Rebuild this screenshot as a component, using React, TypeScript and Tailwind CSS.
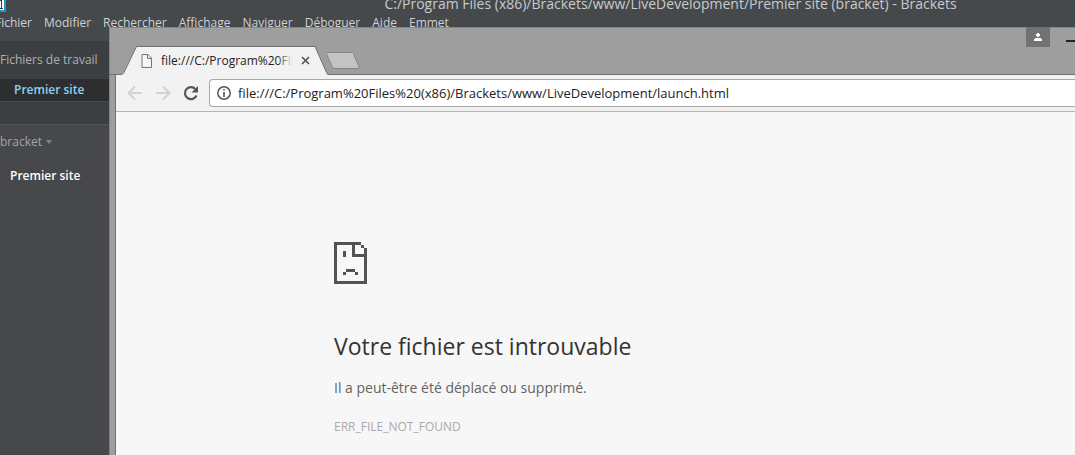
import { useState } from 'react'

const MENUS = ['Fichier', 'Modifier', 'Rechercher', 'Affichage', 'Naviguer', 'Déboguer', 'Aide', 'Emmet']

function FileIcon() {
  return (
    <svg width="12" height="14" viewBox="0 0 12 14" className="shrink-0" fill="none" stroke="#757575">
      <path d="M1 .5h6l3.5 3.5v9.5H1z" fill="#f7f7f7" />
      <path d="M6.5 .5v4h4" />
    </svg>
  )
}

function SadFileIcon() {
  return (
    <svg width="33" height="42" viewBox="0 0 11 14" fill="#535353" shapeRendering="crispEdges">
      <path d="M0 0h9v1h1v1h1v12H0zM1 1v12h9V5H6V1zM7 1v3h3V2H9V1z" fillRule="evenodd" />
      <path d="M3 3h1v2H3zM4 9h3v1H4zM3 10h1v1H3zM7 10h1v1H7z" />
    </svg>
  )
}

function MenuBar() {
  return (
    <header className="h-[41px] overflow-hidden bg-[#45494c]">
      <div className="flex h-[15px] items-start">
        <svg width="6" height="12" viewBox="0 0 6 12" className="shrink-0">
          <path d="M0 0h6v12H0z" fill="#2196d3" />
          <path d="M0 0h4v10H0z" fill="#fff" />
          <path d="M0 0h3v9H0z" fill="#3c3f41" />
          <path d="M0 1h1v7H0zM2 0h1v8H2z" fill="#fff" />
        </svg>
        <h1 className="-mt-1.5 flex-1 pl-[260px] text-center text-[14px] leading-5 text-[#c9cbcc]">
          C:/Program Files (x86)/Brackets/www/LiveDevelopment/Premier site (bracket) - Brackets
        </h1>
      </div>
      <nav className="-ml-[5px] flex gap-3">
        {MENUS.map(m => (
          <button key={m} className="text-[12px] leading-4 text-[#d0d2d3]">{m}</button>
        ))}
      </nav>
    </header>
  )
}

function Sidebar() {
  return (
    <aside className="w-[109px] flex-1 bg-[#47484b] text-[12px] leading-4">
      <section className="h-[84px] border-b border-[#525457] bg-[#3c3f41] pt-[11px]">
        <h2 className="whitespace-nowrap text-[#adb0b1]">Fichiers de travail</h2>
        <a href="#working" className="mt-[11px] block h-[23px] border-b border-[#484a4c] bg-[#2d2e30] pl-3.5 pt-[3px] font-semibold text-[#8fd0f5]">
          Premier site
        </a>
      </section>
      <section>
        <button className="mt-[9px] flex items-center gap-1 text-[#a0a5a6]">
          bracket
          <svg width="6" height="4" viewBox="0 0 6 4" fill="#7d8587"><path d="M0 0h6L3 4z" /></svg>
        </button>
        <a href="#tree" className="mt-[18px] block pl-2.5 font-semibold text-white">Premier site</a>
      </section>
    </aside>
  )
}

function TabStrip() {
  return (
    <div className="relative flex h-12 border-b border-[#707070] pl-[7px]">
      {/* active tab, its foot covers the strip's bottom line */}
      <div className="relative mt-[19px] h-[29px] w-[212px] shrink-0">
        <svg width="212" height="29" viewBox="0 0 212 29" className="absolute left-0 top-0">
          <path d="M4 29L7 27.500L20.500.5H199L211 28l1 1z" fill="#f2f2f2" />
          <path d="M0 28.500H5Q7 28.500 8 26.500L20.500.5H199L210.500 26.500L212 28.500" fill="none" stroke="#707070" />
        </svg>
        <div className="relative flex h-full items-center pl-[25px]">
          <FileIcon />
          <span className="relative ml-2 w-[132px] overflow-hidden whitespace-nowrap text-[12px] leading-4 text-[#222]">
            file:///C:/Program%20Files
            <span className="absolute inset-y-0 right-0 w-4 bg-linear-to-r from-[#f2f2f200] to-[#f2f2f2]" />
          </span>
          <button aria-label="Fermer l'onglet" className="ml-2">
            <svg width="9" height="9" viewBox="0 0 9 9" stroke="#555" strokeWidth="1.700"><path d="M1 1l7 7M8 1L1 8" /></svg>
          </button>
        </div>
      </div>
      <button aria-label="Nouvel onglet" className="-ml-0.5 mt-[25px] h-[18px]">
        <svg width="36" height="18" viewBox="0 0 36 18" fill="#c3c3c3" stroke="#858585">
          <path d="M1 .5H26Q27 .5 27.500 1.500L33 15Q33.500 16.500 32 16.500H9Q7 16.500 6.500 15.500L.5 2Q0 .5 1 .5z" />
        </svg>
      </button>
      <div className="ml-auto flex items-start">
        <button aria-label="Profil" className="flex h-5 w-6 items-center justify-center bg-[#727272]">
          <svg width="8" height="8" viewBox="0 0 8 8" fill="#fff"><path d="M3 0h2v1h1v2H5v1H3V3H2V1h1zM1 5h6v1h1v2H0V6h1z" /></svg>
        </button>
        <button aria-label="Réduire" className="ml-4 mt-[13px] w-[9px]">
          <span className="block h-0.5 bg-[#222]" />
        </button>
      </div>
    </div>
  )
}

function Toolbar() {
  const [url, setUrl] = useState('file:///C:/Program%20Files%20(x86)/Brackets/www/LiveDevelopment/launch.html')

  return (
    <div className="flex h-[37px] items-center border-b border-[#b4b4b4] bg-[#f2f2f2] pl-[11px]">
      <button aria-label="Précédent" disabled>
        <svg width="16" height="16" viewBox="0 0 16 16" fill="none" stroke="#d2d2d2" strokeWidth="2"><path d="M15 8H2M8 1.500L1.500 8 8 14.500" /></svg>
      </button>
      <button aria-label="Suivant" disabled className="ml-3">
        <svg width="16" height="16" viewBox="0 0 16 16" fill="none" stroke="#d2d2d2" strokeWidth="2"><path d="M1 8h13M8 1.500L14.500 8 8 14.500" /></svg>
      </button>
      <button aria-label="Actualiser" className="ml-3">
        <svg width="16" height="16" viewBox="0 0 16 16">
          <path d="M13.500 10.500A6 6 0 1 1 12.300 4" fill="none" stroke="#555" strokeWidth="2.200" />
          <path d="M15 1v6.500H8.500z" fill="#555" />
        </svg>
      </button>
      <div className="ml-2.5 flex h-7 flex-1 items-center rounded-l-sm border border-r-0 border-[#a8a8a8] bg-white pl-[7px]">
        <svg width="14" height="14" viewBox="0 0 14 14" className="shrink-0">
          <circle cx="7" cy="7" r="6.200" fill="none" stroke="#555" strokeWidth="1.500" />
          <path d="M6.200 3h1.600v1.600H6.200zM6.200 6h1.600v5H6.200z" fill="#555" />
        </svg>
        <input
          aria-label="Adresse"
          value={url}
          onChange={e => setUrl(e.target.value)}
          spellCheck={false}
          className="ml-[7px] min-w-0 flex-1 text-[13px] leading-5 text-[#222] outline-none"
        />
      </div>
    </div>
  )
}

function ErrorPage() {
  return (
    <main className="flex-1 bg-[#f7f7f7] pl-[218px] pt-[130px]">
      <SadFileIcon />
      <h2 className="mt-[46px] text-[23px] leading-8 text-[#333]">Votre fichier est introuvable</h2>
      <p className="mt-4 text-[14px] leading-5 text-[#646464]">Il a peut-être été déplacé ou supprimé.</p>
      <p className="mt-5 text-[12px] leading-[18px] text-[#aaa]">ERR_FILE_NOT_FOUND</p>
    </main>
  )
}

export default function App() {
  return (
    <div className="relative flex min-h-screen flex-col overflow-hidden bg-[#47484b] font-['Open_Sans','Noto_Sans',sans-serif]">
      <MenuBar />
      <Sidebar />
      {/* browser window floating over the editor */}
      <div className="absolute bottom-0 left-[109px] right-0 top-[27px] flex flex-col border-l border-t border-[#858585] bg-[#9e9e9e]">
        <div className="-ml-px -mt-px"><TabStrip /></div>
        <div className="ml-[5px] flex flex-1 flex-col border-l border-[#707070]">
          <Toolbar />
          <ErrorPage />
        </div>
      </div>
    </div>
  )
}
